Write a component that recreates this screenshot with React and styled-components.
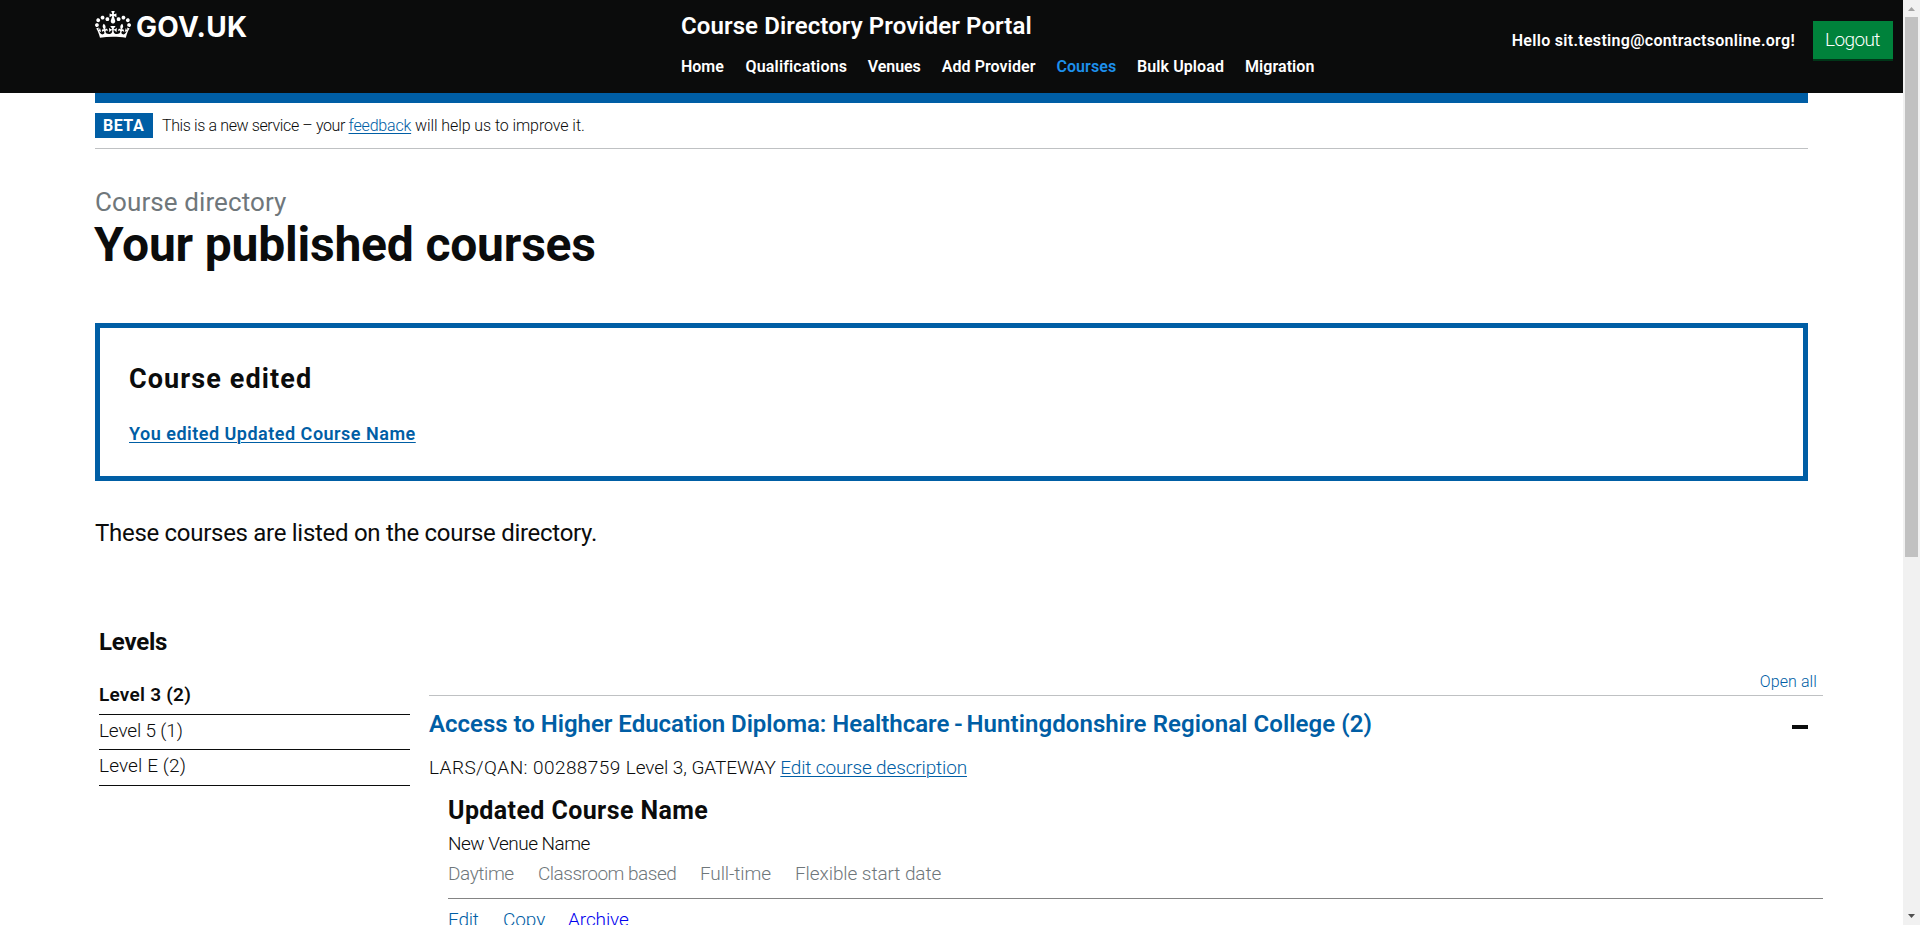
import React from "react";
import styled, { createGlobalStyle } from "styled-components";

const color = {
  black: "#0b0c0c",
  blue: "#005ea5",
  grey: "#6f777b",
  border: "#bfc1c3",
};

const GlobalStyle = createGlobalStyle`
  *, *::before, *::after { box-sizing: border-box; }
  html, body { margin: 0; overflow: hidden; background: #fff; }
  body {
    font-family: Roboto, "Liberation Sans", sans-serif;
    color: ${color.black};
  }
  h1, h2, h3, p, ul { margin: 0; padding: 0; font-weight: inherit; }
  ul { list-style: none; }
`;

const Window = styled.div`
  display: flex;
  width: 1920px;
  height: 925px;
  overflow: hidden;
`;

const Page = styled.div`
  flex: none;
  width: 1903px;
  height: 925px;
  overflow: hidden;
`;

const Track = styled.span`
  letter-spacing: ${(p) => p.$by}px;
`;

/* Header */

const Header = styled.header`
  display: flex;
  height: 93px;
  padding: 0 10px 0 95px;
  background: ${color.black};
  color: #fff;
`;

const Brand = styled.a`
  display: flex;
  flex: none;
  width: 586px;
  padding-top: 11px;
  gap: 5px;
`;

const Crown = styled.svg`
  width: 36px;
  height: 27px;
  fill: #fff;
`;

const BrandName = styled.span`
  font-family: Inter, "Liberation Sans", sans-serif;
  font-size: 28px;
  font-weight: 700;
  line-height: 32px;
  letter-spacing: 0.3px;
`;

const Navigation = styled.div`
  flex: 1;
  white-space: nowrap;
`;

const ServiceName = styled.div`
  padding-top: 11px;
  font-size: 24px;
  font-weight: 600;
  line-height: 30px;
  letter-spacing: 0.09px;
`;

const Menu = styled.ul`
  display: flex;
  gap: 21.6px;
  padding-top: 15px;
  font-size: 16px;
  font-weight: 600;
  line-height: 22px;
`;

const MenuItem = styled.li`
  flex: none;
  width: ${(p) => p.$width}px;
  color: ${(p) => (p.$active ? "#1d8feb" : "#fff")};
  letter-spacing: ${(p) => p.$track}px;
`;

const Account = styled.div`
  display: flex;
  align-items: flex-start;
  gap: 18px;
  padding-top: 21px;
`;

const Greeting = styled.div`
  font-size: 16px;
  font-weight: 600;
  line-height: 40px;
  letter-spacing: 0.3px;
`;

const LogoutButton = styled.button`
  width: 80px;
  height: 38px;
  padding: 0 0 0 12px;
  border: 0;
  background: #00823b;
  box-shadow: 0 2px 0 #003618;
  color: #fff;
  font: 300 19px/38px Roboto, "Liberation Sans", sans-serif;
  letter-spacing: -0.6px;
  text-align: left;
`;

/* Phase banner */

const Container = styled.div`
  width: 1713px;
  margin-left: 95px;
`;

const BlueBar = styled.div`
  height: 10px;
  background: ${color.blue};
`;

const PhaseBanner = styled.div`
  display: flex;
  align-items: center;
  gap: 9px;
  height: 46px;
  padding: 0 0 1px;
  border-bottom: 1px solid ${color.border};
`;

const PhaseTag = styled.strong`
  width: 58px;
  height: 25px;
  padding-left: 8px;
  background: ${color.blue};
  color: #fff;
  font-size: 16px;
  font-weight: 700;
  line-height: 25px;
  letter-spacing: 0.5px;
`;

const PhaseText = styled.p`
  padding-top: 1px;
  font-size: 16px;
  font-weight: 300;
  line-height: 24px;
`;

const Link = styled.a`
  color: ${color.blue};
  text-decoration: underline;
  text-decoration-thickness: 1px;
  text-underline-offset: 2px;
`;

/* Main heading and notice */

const Caption = styled.p`
  padding-top: 37px;
  color: ${color.grey};
  font-size: 26px;
  line-height: 32px;
  letter-spacing: 0.1px;
`;

const Title = styled.h1`
  margin: 2px 0 0 -1px;
  font-size: 48px;
  font-weight: 700;
  line-height: 50px;
  letter-spacing: -0.2px;
`;

const Notice = styled.section`
  height: 158px;
  margin-top: 53px;
  padding: 33px 29px 0;
  border: 5px solid ${color.blue};
`;

const NoticeTitle = styled.h2`
  font-size: 27px;
  font-weight: 700;
  line-height: 36px;
  letter-spacing: 1.1px;
`;

const NoticeLink = styled.p`
  padding-top: 24px;
  font-size: 18px;
  font-weight: 600;
  line-height: 26px;
  letter-spacing: 0.5px;
`;

const Lead = styled.p`
  padding-top: 37px;
  font-size: 24px;
  line-height: 30px;
  letter-spacing: -0.29px;
`;

/* Levels and courses */

const Columns = styled.div`
  display: flex;
  gap: 19px;
  width: 1724px;
  margin: 77px 0 0 99px;
`;

const Sidebar = styled.nav`
  flex: none;
  width: 311px;
`;

const SidebarTitle = styled.h2`
  padding-bottom: 20px;
  font-size: 24px;
  font-weight: 700;
  line-height: 34px;
  letter-spacing: -0.2px;
`;

const Level = styled.div`
  height: ${(p) => p.$height}px;
  border-bottom: 1px solid ${color.black};
  font-size: 19px;
  font-weight: ${(p) => (p.$active ? 600 : 300)};
  line-height: ${(p) => (p.$active ? 31 : 32)}px;
  letter-spacing: ${(p) => p.$track}px;
`;

const Courses = styled.main`
  flex: 1;
`;

const OpenAllRow = styled.div`
  display: flex;
  justify-content: flex-end;
  height: 71px;
  padding: 47px 6px 0 0;
  border-bottom: 1px solid ${color.border};
`;

const OpenAll = styled.a`
  color: ${color.blue};
  font-size: 16px;
  font-weight: 300;
  line-height: 20px;
  letter-spacing: 0.1px;
`;

const AccordionHeader = styled.div`
  display: flex;
  align-items: center;
  justify-content: space-between;
  height: 58px;
  padding: 0 15px 3px 0;
`;

const AccordionTitle = styled.h2`
  color: ${color.blue};
  font-size: 24px;
  font-weight: 600;
  line-height: 30px;
  white-space: pre;
`;

const Minus = styled.span`
  width: 16px;
  height: 4px;
  margin-top: 7px;
  background: ${color.black};
`;

const CourseMeta = styled.p`
  font-size: 19px;
  font-weight: 300;
  line-height: 28px;
  white-space: pre;
`;

const CourseCard = styled.article`
  padding: 14px 0 0 19px;
`;

const CourseName = styled.h3`
  font-size: 25px;
  font-weight: 700;
  line-height: 30px;
  letter-spacing: 0.4px;
`;

const Venue = styled.p`
  padding-top: 5px;
  font-size: 19px;
  font-weight: 300;
  line-height: 26px;
  letter-spacing: -0.52px;
`;

const Attributes = styled.ul`
  display: flex;
  height: 42px;
  padding-top: 4px;
  border-bottom: 1px solid #848484;
  color: ${color.grey};
  font-size: 19px;
  font-weight: 300;
  line-height: 26px;
`;

const Actions = styled.div`
  display: flex;
  padding-top: 8px;
  font-size: 19px;
  font-weight: 300;
  line-height: 26px;
`;

const Cell = styled.li`
  display: block;
  flex: none;
  width: ${(p) => p.$width}px;
  letter-spacing: ${(p) => p.$track}px;
`;

const ActionLink = styled.a`
  flex: none;
  width: ${(p) => p.$width}px;
  color: ${(p) => (p.$plain ? "#0000ee" : color.blue)};
  letter-spacing: ${(p) => p.$track}px;
`;

/* Window scroll bar */

const Scrollbar = styled.div`
  display: flex;
  flex-direction: column;
  flex: none;
  align-items: center;
  width: 17px;
  height: 925px;
  background: #f1f1f1;
`;

const ScrollButton = styled.svg`
  display: block;
  width: 17px;
  height: 17px;
  fill: ${(p) => (p.$dim ? "#a3a3a3" : "#505050")};
`;

const Thumb = styled.div`
  width: 13px;
  height: 540px;
  margin-bottom: auto;
  background: #c1c1c1;
`;

const menu = [
  { label: "Home", width: 43, track: -0.05 },
  { label: "Qualifications", width: 100.5, track: 0.15 },
  { label: "Venues", width: 52.5, track: -0.05 },
  { label: "Add Provider", width: 93, track: 0.06 },
  { label: "Courses", width: 59, track: 0.1, active: true },
  { label: "Bulk Upload", width: 86.5, track: 0.1 },
  { label: "Migration", width: 69, track: 0.05 },
];

const levels = [
  { label: "Level 3 (2)", height: 36, track: 0.25, active: true },
  { label: "Level 5 (1)", height: 35, track: -0.16 },
  { label: "Level E (2)", height: 36, track: 0.12 },
];

const attributes = [
  { label: "Daytime", width: 90, track: -0.4 },
  { label: "Classroom based", width: 162, track: -0.5 },
  { label: "Full-time", width: 95, track: -0.12 },
  { label: "Flexible start date", width: 160, track: -0.08 },
];

const actions = [
  { label: "Edit", width: 55, track: -0.2 },
  { label: "Copy", width: 65, track: -0.1 },
  { label: "Archive", width: 70, track: -0.1, plain: true },
];

const CrownIcon = () => (
  <Crown viewBox="0 0 132 97" preserveAspectRatio="none">
    <path
      fillRule="evenodd"
      d="M25 30.2c3.5 1.5 7.7-.2 9.1-3.7 1.5-3.6-.2-7.8-3.9-9.2-3.6-1.4-7.6.3-9.1 3.9-1.4 3.5.3 7.5 3.9 9zM9 39.5c3.6 1.5 7.8-.2 9.2-3.7 1.5-3.6-.2-7.8-3.9-9.1-3.6-1.5-7.6.2-9.1 3.8-1.4 3.5.3 7.5 3.8 9zM4.4 57.2c3.5 1.5 7.7-.2 9.1-3.8 1.5-3.6-.2-7.7-3.9-9.1-3.5-1.5-7.6.3-9.1 3.8-1.4 3.5.3 7.6 3.9 9.1zm38.3-21.4c3.5 1.5 7.7-.2 9.1-3.8 1.5-3.6-.2-7.7-3.9-9.1-3.6-1.5-7.6.3-9.1 3.8-1.3 3.6.4 7.7 3.9 9.1zm64.4-5.6c-3.6 1.5-7.8-.2-9.1-3.7-1.5-3.6.2-7.8 3.8-9.2 3.6-1.4 7.7.3 9.2 3.9 1.3 3.5-.4 7.5-3.9 9zm15.9 9.3c-3.6 1.5-7.7-.2-9.1-3.7-1.5-3.6.2-7.8 3.7-9.1 3.6-1.5 7.7.2 9.2 3.8 1.5 3.5-.3 7.5-3.8 9zm4.7 17.7c-3.6 1.5-7.8-.2-9.2-3.8-1.5-3.6.2-7.7 3.9-9.1 3.6-1.5 7.7.3 9.2 3.8 1.3 3.5-.4 7.6-3.9 9.1zM89.3 35.8c-3.6 1.5-7.8-.2-9.2-3.8-1.4-3.6.2-7.7 3.9-9.1 3.6-1.5 7.7.3 9.2 3.8 1.4 3.6-.3 7.7-3.9 9.1zM69.7 17.7l8.9 4.7V9.3l-8.9 2.8c-.2-.3-.5-.6-.9-.9L72.4 0H59.6l3.5 11.2c-.3.3-.6.5-.9.9l-8.8-2.8v13.1l8.8-4.7c.3.3.6.7.9.9l-5 15.4v.1c-.2.8-.4 1.6-.4 2.4 0 4.1 3.1 7.5 7 8.1h.2c.3 0 .7.1 1 .1.4 0 .7 0 1-.1h.2c4-.6 7.1-4.1 7.1-8.1 0-.8-.1-1.7-.4-2.4V34l-5.1-15.4c.4-.2.7-.6 1-.9zM66 92.8c16.9 0 32.8 1.1 47.1 3.2 4-16.9 8.9-26.7 14-33.5l-9.6-3.4c1 4.9 1.1 7.2 0 10.2-1.5-1.4-3-4.3-4.2-8.7L108.6 76c2.8-2 5-3.2 7.5-3.3-4.4 9.4-10 11.9-13.6 11.2-4.3-.8-6.3-4.6-5.6-7.9 1-4.7 5.7-5.9 8-.5 4.3-8.7-3-11.4-7.6-8.8 7.1-7.2 7.9-13.5 2.1-21.1-8 6.1-8.1 12.3-4.5 20.8-4.7-5.4-12.1-2.5-9.5 6.2 3.4-5.2 7.9-2 7.2 3.1-.6 4.3-6.4 7.8-13.5 7.2-10.3-.9-10.9-8-11.2-13.8 2.5-.5 7.1 1.8 11 7.3L80.2 60c-4.1 4.4-8 5.3-12.3 5.4 1.4-4.4 8-11.6 8-11.6H55.5s6.4 7.2 7.9 11.6c-4.2-.1-8-1-12.3-5.4l1.4 16.4c3.9-5.5 8.5-7.7 10.9-7.3-.3 5.8-.9 12.8-11.1 13.8-7.2.6-12.9-2.9-13.5-7.2-.7-5 3.8-8.3 7.1-3.1 2.7-8.7-4.6-11.6-9.4-6.2 3.7-8.5 3.6-14.7-4.6-20.8-5.8 7.6-5 13.9 2.2 21.1-4.7-2.6-11.9.1-7.7 8.8 2.3-5.5 7.1-4.2 8.1.5.7 3.3-1.3 7.1-5.7 7.9-3.5.7-9-1.8-13.5-11.2 2.5.1 4.7 1.3 7.5 3.3l-4.7-15.4c-1.2 4.4-2.7 7.2-4.3 8.7-1.1-3-.9-5.3 0-10.2l-9.5 3.4c5 6.9 9.9 16.7 14 33.5 14.8-2.1 30.8-3.2 47.7-3.2z"
    />
  </Crown>
);

export default function App() {
  return (
    <>
      <GlobalStyle />
      <Window>
        <Page>
          <Header>
            <Brand>
              <CrownIcon />
              <BrandName>GOV.UK</BrandName>
            </Brand>
            <Navigation>
              <ServiceName>Course Directory Provider Portal</ServiceName>
              <Menu>
                {menu.map((item) => (
                  <MenuItem key={item.label} $width={item.width} $track={item.track} $active={item.active}>
                    {item.label}
                  </MenuItem>
                ))}
              </Menu>
            </Navigation>
            <Account>
              <Greeting>Hello sit.testing@contractsonline.org!</Greeting>
              <LogoutButton>Logout</LogoutButton>
            </Account>
          </Header>

          <Container>
            <BlueBar />
            <PhaseBanner>
              <PhaseTag>BETA</PhaseTag>
              <PhaseText>
                <Track $by={-0.38}>This is a new service – your </Track>
                <Track $by={-0.19}>
                  <Link>feedback</Link>
                </Track>
                <Track $by={-0.08}> will help us to improve it.</Track>
              </PhaseText>
            </PhaseBanner>
            <Caption>Course directory</Caption>
            <Title>Your published courses</Title>
            <Notice>
              <NoticeTitle>Course edited</NoticeTitle>
              <NoticeLink>
                <Link>You edited Updated Course Name</Link>
              </NoticeLink>
            </Notice>
            <Lead>These courses are listed on the course directory.</Lead>
          </Container>

          <Columns>
            <Sidebar>
              <SidebarTitle>Levels</SidebarTitle>
              {levels.map((level) => (
                <Level key={level.label} $height={level.height} $track={level.track} $active={level.active}>
                  {level.label}
                </Level>
              ))}
            </Sidebar>
            <Courses>
              <OpenAllRow>
                <OpenAll>Open all</OpenAll>
              </OpenAllRow>
              <AccordionHeader>
                <AccordionTitle>
                  <Track $by={-0.02}>Access to Higher Education Diploma: Healthcare</Track>
                  <Track $by={-1.2}> - </Track>
                  <Track $by={0.08}>Huntingdonshire Regional College (2)</Track>
                </AccordionTitle>
                <Minus />
              </AccordionHeader>
              <CourseMeta>
                <Track $by={0.42}>LARS/QAN: 00288759 </Track>
                <Track $by={-0.07}>Level 3, GATEWAY </Track>
                <Track $by={-0.15}>
                  <Link>Edit course description</Link>
                </Track>
              </CourseMeta>
              <CourseCard>
                <CourseName>Updated Course Name</CourseName>
                <Venue>New Venue Name</Venue>
                <Attributes>
                  {attributes.map((item) => (
                    <Cell key={item.label} $width={item.width} $track={item.track}>
                      {item.label}
                    </Cell>
                  ))}
                </Attributes>
                <Actions>
                  {actions.map((item) => (
                    <ActionLink key={item.label} $width={item.width} $track={item.track} $plain={item.plain}>
                      {item.label}
                    </ActionLink>
                  ))}
                </Actions>
              </CourseCard>
            </Courses>
          </Columns>
        </Page>
        <Scrollbar>
          <ScrollButton $dim viewBox="0 0 17 17">
            <path d="M5 11 8.5 7 12 11z" />
          </ScrollButton>
          <Thumb />
          <ScrollButton viewBox="0 0 17 17">
            <path d="M5 6 12 6 8.5 10z" />
          </ScrollButton>
        </Scrollbar>
      </Window>
    </>
  );
}
